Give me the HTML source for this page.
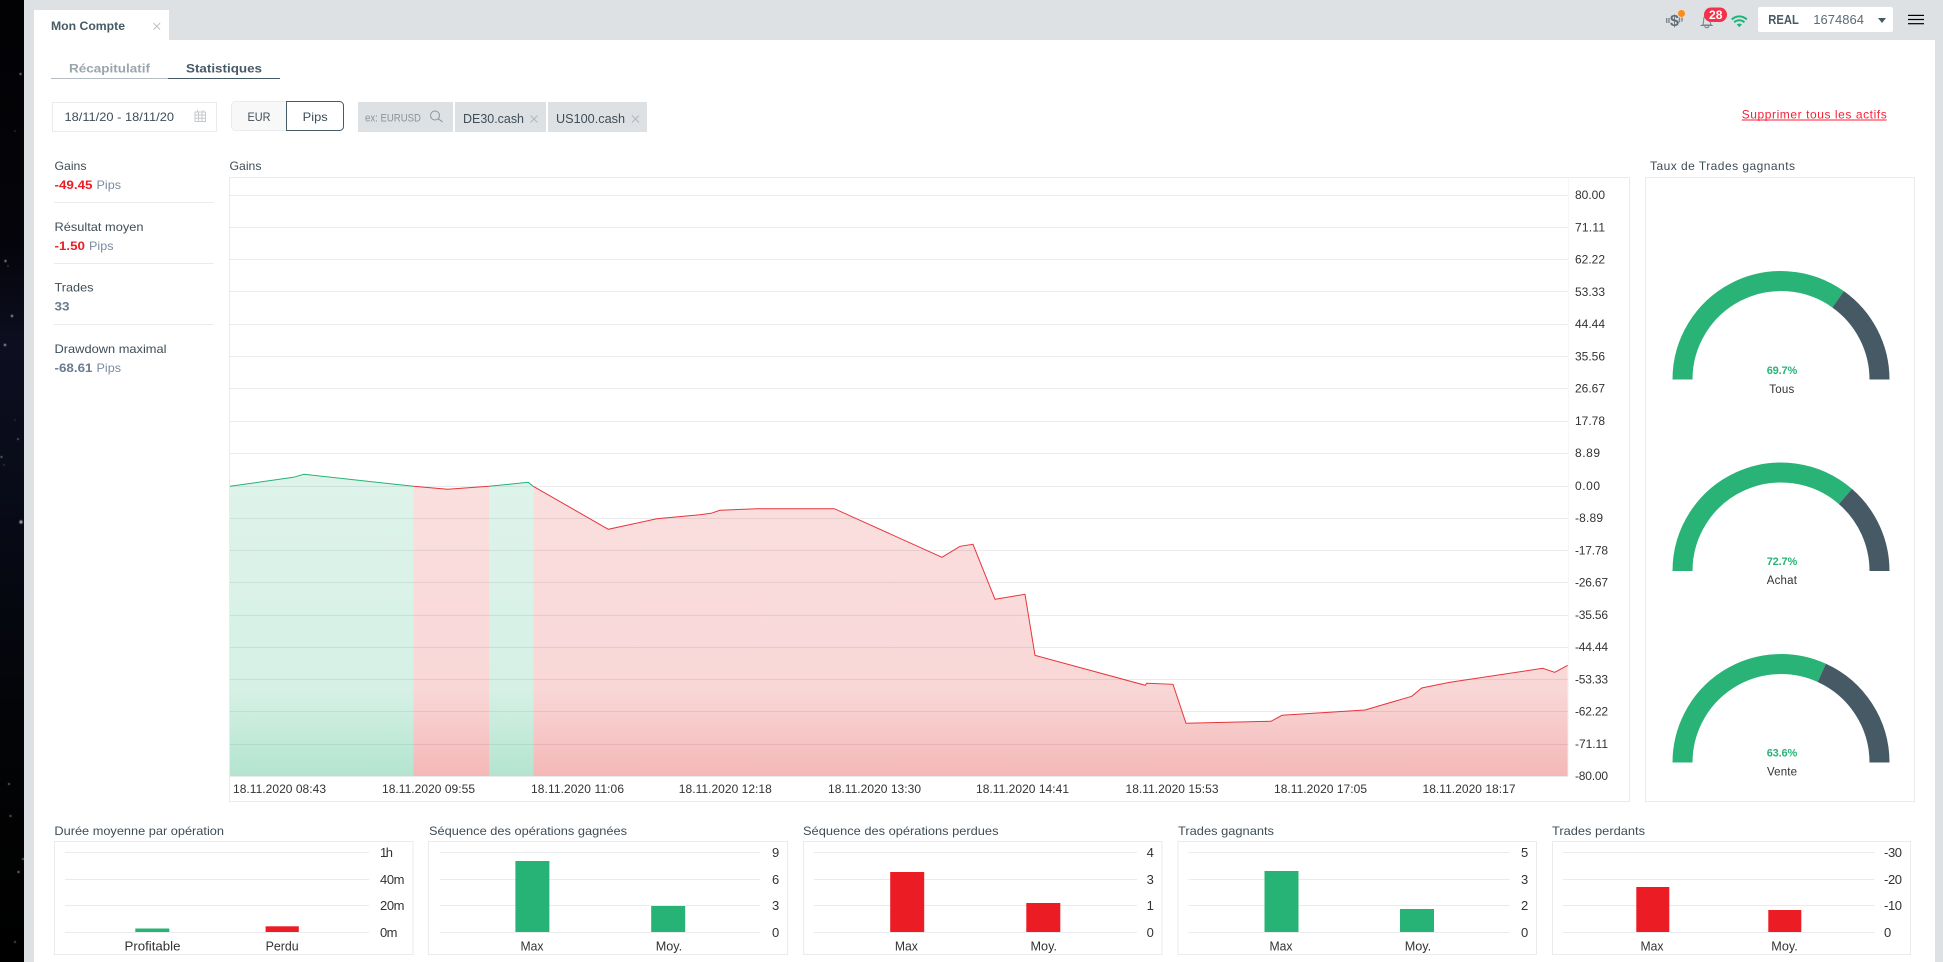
<!DOCTYPE html>
<html lang="fr">
<head>
<meta charset="utf-8">
<title>Mon Compte - Statistiques</title>
<style>
html,body{margin:0;padding:0;background:#000;width:1943px;height:962px;overflow:hidden}
svg{display:block}
text{font-family:"Liberation Sans",sans-serif;font-size:12px;fill:#3b4750}
.b{font-weight:700}
.n{fill:#333}
.t{fill:#3f4d57}
.v{fill:#7c8aa0}
</style>
</head>
<body>
<svg width="1943" height="962" viewBox="0 0 1943 962" xmlns="http://www.w3.org/2000/svg">
<defs>
<linearGradient id="sky" x1="0" y1="0" x2="0" y2="1">
<stop offset="0" stop-color="#020204"/><stop offset=".25" stop-color="#04040a"/><stop offset=".36" stop-color="#0d0e20"/><stop offset=".55" stop-color="#070a16"/><stop offset=".75" stop-color="#030406"/><stop offset="1" stop-color="#000"/>
</linearGradient>
<linearGradient id="fr" gradientUnits="userSpaceOnUse" x1="0" y1="470" x2="0" y2="776">
<stop offset="0" stop-color="#dd2020" stop-opacity=".14"/><stop offset=".72" stop-color="#dd2020" stop-opacity=".18"/><stop offset="1" stop-color="#dd2020" stop-opacity=".32"/>
</linearGradient>
<linearGradient id="fg" gradientUnits="userSpaceOnUse" x1="0" y1="470" x2="0" y2="776">
<stop offset="0" stop-color="#26b276" stop-opacity=".15"/><stop offset=".72" stop-color="#26b276" stop-opacity=".19"/><stop offset="1" stop-color="#26b276" stop-opacity=".35"/>
</linearGradient>
<clipPath id="cg"><rect x="230" y="450" width="183.3" height="326"/><rect x="489" y="450" width="44.3" height="326"/></clipPath>
<clipPath id="cr"><rect x="413.3" y="450" width="75.7" height="326"/><rect x="533.3" y="450" width="1035" height="326"/></clipPath>
<filter id="soft" x="-50%" y="-50%" width="200%" height="200%"><feGaussianBlur stdDeviation=".5"/></filter>
</defs>

<!-- backdrop -->
<rect x="0" y="0" width="24" height="962" fill="url(#sky)"/>
<g fill="#cfcfcf" filter="url(#soft)" opacity=".75">
<circle cx="20.5" cy="74" r="1"/><circle cx="15" cy="131" r=".7" opacity=".5"/><circle cx="5.5" cy="261" r="1.1"/><circle cx="8" cy="266" r=".7" opacity=".6"/><circle cx="12" cy="316" r="1.2"/><circle cx="5" cy="345" r="1.2"/><circle cx="1.5" cy="457" r=".9"/><circle cx="18" cy="439" r=".8"/><circle cx="4" cy="465" r=".7" opacity=".5"/><circle cx="21" cy="522" r="1.7"/><circle cx="9" cy="784" r=".9"/><circle cx="10.5" cy="816" r=".9"/><circle cx="23" cy="859" r=".9"/><circle cx="18.5" cy="872" r="1"/><circle cx="15" cy="942" r=".8"/><circle cx="15" cy="420" r=".6" opacity=".5"/>
</g>
<rect x="24" y="0" width="1919" height="962" fill="#dde1e4"/>
<rect x="34" y="40" width="1901" height="922" fill="#fff"/>

<!-- window tab -->
<rect x="34" y="10" width="135" height="30" fill="#fff"/>
<text x="51" y="30" class="b" style="fill:#465a66" textLength="74" lengthAdjust="spacingAndGlyphs">Mon Compte</text>
<path d="M153.5 23l6.6 6.6M160.100 23l-6.600 6.600" stroke="#bcc2c6" stroke-width="1" fill="none"/>

<!-- header right -->
<text x="1674.500" y="26" class="b" text-anchor="middle" style="font-size:16px;fill:#5f6d76">$</text>
<path d="M1666.700 18v5M1669 18v5M1679.500 17.500v5M1682 17.500v4" stroke="#7b8790" stroke-width="1.400" fill="none"/>
<circle cx="1681.500" cy="13.500" r="3.500" fill="#ff8c14"/>
<path d="M1702.500 25c1.300-1.500 1-3.500 1.200-5.500.2-2.500 1.300-4.500 3.100-4.500s3 2 3.200 4.500c.2 2 0 4 1.300 5.500zM1700.500 25.500h12.300M1704.800 26c.3 2.300 3.700 2.300 4 0" fill="none" stroke="#75828b" stroke-width="1"/>
<rect x="1704" y="7.500" width="23" height="14.500" rx="7.200" fill="#f5304a"/>
<text x="1709" y="19" class="b" style="fill:#fff;font-size:12px" textLength="13.500" lengthAdjust="spacingAndGlyphs">28</text>
<path d="M1731.800 19.500c4.200-4.200 10.800-4.200 15 0M1734.200 22.300c2.800-2.700 7.400-2.700 10.200 0" fill="none" stroke="#1db67a" stroke-width="2"/>
<path d="M1736.700 24.500c1.500-1.200 3.700-1.200 5.200 0L1739.300 27.200z" fill="#1db67a"/>
<rect x="1758" y="7" width="135" height="25" rx="2" fill="#fff"/>
<text x="1768.300" y="24" class="b" style="fill:#465a66;font-size:13px" textLength="30.500" lengthAdjust="spacingAndGlyphs">REAL</text>
<text x="1813.300" y="24" style="fill:#5b6b75;font-size:13px" textLength="50.700" lengthAdjust="spacing">1674864</text>
<path d="M1878 18h8l-4 5z" fill="#465a66"/>
<rect x="1908" y="14.800" width="16" height="1.200" fill="#000"/><rect x="1908" y="18.900" width="16" height="1.200" fill="#000"/><rect x="1908" y="23.100" width="16" height="1.200" fill="#000"/>

<!-- subtabs -->
<text x="69" y="72.500" class="b" style="fill:#9aa5ac" textLength="81" lengthAdjust="spacingAndGlyphs">Récapitulatif</text>
<text x="186" y="72.500" class="b" style="fill:#465a66" textLength="76" lengthAdjust="spacingAndGlyphs">Statistiques</text>
<rect x="51" y="78" width="117" height="1" fill="#b5bdc2"/><rect x="168" y="78" width="112" height="1" fill="#465a66"/>

<!-- filters -->
<rect x="52.500" y="102.500" width="164" height="29" fill="#fff" stroke="#e9ebed"/>
<text x="64.500" y="121" class="t" textLength="109.500" lengthAdjust="spacingAndGlyphs">18/11/20 - 18/11/20</text>
<g fill="none" stroke="#c6cacd" stroke-width="1">
<rect x="195" y="112" width="10.500" height="9.500"/><path d="M195 115h10.500M198.500 112v9.500M202 112v9.500M195 118.300h10.500M197.500 110v2M203 110v2"/>
</g>
<rect x="231.500" y="101.500" width="112" height="29" rx="4" fill="#f8f8f8" stroke="#e9ebed"/>
<path d="M286.500 101.500h53a4 4 0 0 1 4 4v21a4 4 0 0 1-4 4h-53z" fill="#fff" stroke="#465a66"/>
<text x="247.500" y="121" class="t" textLength="23" lengthAdjust="spacingAndGlyphs">EUR</text>
<text x="302.700" y="121" class="t" textLength="25" lengthAdjust="spacingAndGlyphs">Pips</text>
<rect x="358" y="102" width="95" height="30" fill="#dde1e4"/>
<text x="365" y="121.500" style="font-size:11px;fill:#8b949a" textLength="56" lengthAdjust="spacingAndGlyphs">ex: EURUSD</text>
<circle cx="435" cy="115.500" r="4.500" fill="none" stroke="#8b949a"/><path d="M438.200 118.800l4.300 3" stroke="#8b949a" fill="none"/>
<rect x="455" y="102" width="91" height="30" fill="#dde1e4"/>
<text x="463" y="123" class="t" style="font-size:13px" textLength="61" lengthAdjust="spacingAndGlyphs">DE30.cash</text>
<path d="M530.500 115.500l7 7M537.500 115.500l-7 7" stroke="#b0b7bc" fill="none"/>
<rect x="548" y="102" width="99" height="30" fill="#dde1e4"/>
<text x="556" y="123" class="t" style="font-size:13px" textLength="69" lengthAdjust="spacingAndGlyphs">US100.cash</text>
<path d="M632 115.500l7 7M639 115.500l-7 7" stroke="#b0b7bc" fill="none"/>
<text x="1741.700" y="118.500" style="fill:#f61f35" textLength="145" lengthAdjust="spacing">Supprimer tous les actifs</text>
<rect x="1741.700" y="119.500" width="145" height="1" fill="#f61f35"/>

<!-- left stats -->
<text x="54.500" y="170" class="t" textLength="32" lengthAdjust="spacingAndGlyphs">Gains</text>
<text x="54.500" y="189" class="b" style="fill:#ed1c24" textLength="38" lengthAdjust="spacingAndGlyphs">-49.45</text>
<text x="96.500" y="189" class="v" textLength="24.500" lengthAdjust="spacingAndGlyphs">Pips</text>
<rect x="54" y="202" width="160" height="1" fill="#e9ebed"/>
<text x="54.500" y="231" class="t" textLength="89" lengthAdjust="spacingAndGlyphs">Résultat moyen</text>
<text x="54.500" y="250" class="b" style="fill:#ed1c24" textLength="30.500" lengthAdjust="spacingAndGlyphs">-1.50</text>
<text x="89" y="250" class="v" textLength="24.500" lengthAdjust="spacingAndGlyphs">Pips</text>
<rect x="54" y="263" width="160" height="1" fill="#e9ebed"/>
<text x="54.500" y="291.500" class="t" textLength="39" lengthAdjust="spacingAndGlyphs">Trades</text>
<text x="54.500" y="310.500" class="b" style="fill:#6a7b90" textLength="15" lengthAdjust="spacingAndGlyphs">33</text>
<rect x="54" y="324" width="160" height="1" fill="#e9ebed"/>
<text x="54.500" y="353" class="t" textLength="112" lengthAdjust="spacingAndGlyphs">Drawdown maximal</text>
<text x="54.500" y="372" class="b" style="fill:#6a7b90" textLength="38" lengthAdjust="spacingAndGlyphs">-68.61</text>
<text x="96.500" y="372" class="v" textLength="24.500" lengthAdjust="spacingAndGlyphs">Pips</text>

<!-- main chart -->
<text x="229.500" y="170" class="t" textLength="32" lengthAdjust="spacingAndGlyphs">Gains</text>
<rect x="229.500" y="177.500" width="1400" height="624" fill="#fff" stroke="#e9ebed"/>
<rect x="1568" y="178" width="1" height="598" fill="#f5f6f6"/>
<g fill="#e9ebed">
<rect x="230" y="195" width="1338" height="1"/><rect x="230" y="227" width="1338" height="1"/><rect x="230" y="259" width="1338" height="1"/><rect x="230" y="291" width="1338" height="1"/><rect x="230" y="324" width="1338" height="1"/><rect x="230" y="356" width="1338" height="1"/><rect x="230" y="388" width="1338" height="1"/><rect x="230" y="421" width="1338" height="1"/><rect x="230" y="453" width="1338" height="1"/><rect x="230" y="486" width="1338" height="1"/><rect x="230" y="518" width="1338" height="1"/><rect x="230" y="550" width="1338" height="1"/><rect x="230" y="582" width="1338" height="1"/><rect x="230" y="615" width="1338" height="1"/><rect x="230" y="647" width="1338" height="1"/><rect x="230" y="679" width="1338" height="1"/><rect x="230" y="711" width="1338" height="1"/><rect x="230" y="744" width="1338" height="1"/><rect x="230" y="776" width="1338" height="1"/>
</g>
<path d="M230 486.300L293.300 477.300 304 474.300 413.300 486.300 447.700 489.300 489 486.300 528.300 482.300 533.300 486.300 608.300 529.300 656.700 518.700 700 514.700 711 513.300 720 510.300 756.700 508.700 834.300 508.700 942 557.300 960 546.300 973 544.300 995 599.300 1025 594.300 1035 655.300 1145.300 685.300 1146.700 683.300 1173 684.300 1186 723.300 1271 721.300 1282 715.300 1365 710 1411.700 696.300 1421.700 688 1450 682.300 1542.700 668.300 1554.700 672.300 1567.700 665.300V776H230Z" fill="url(#fr)" clip-path="url(#cr)"/>
<path d="M230 486.300L293.300 477.300 304 474.300 413.300 486.300 447.700 489.300 489 486.300 528.300 482.300 533.300 486.300 608.300 529.300 656.700 518.700 700 514.700 711 513.300 720 510.300 756.700 508.700 834.300 508.700 942 557.300 960 546.300 973 544.300 995 599.300 1025 594.300 1035 655.300 1145.300 685.300 1146.700 683.300 1173 684.300 1186 723.300 1271 721.300 1282 715.300 1365 710 1411.700 696.300 1421.700 688 1450 682.300 1542.700 668.300 1554.700 672.300 1567.700 665.300V776H230Z" fill="url(#fg)" clip-path="url(#cg)"/>
<path d="M230 486.300L293.300 477.300 304 474.300 413.300 486.300 447.700 489.300 489 486.300 528.300 482.300 533.300 486.300 608.300 529.300 656.700 518.700 700 514.700 711 513.300 720 510.300 756.700 508.700 834.300 508.700 942 557.300 960 546.300 973 544.300 995 599.300 1025 594.300 1035 655.300 1145.300 685.300 1146.700 683.300 1173 684.300 1186 723.300 1271 721.300 1282 715.300 1365 710 1411.700 696.300 1421.700 688 1450 682.300 1542.700 668.300 1554.700 672.300 1567.700 665.300" fill="none" stroke="#e8353c" stroke-width="1" clip-path="url(#cr)"/>
<path d="M230 486.300L293.300 477.300 304 474.300 413.300 486.300 447.700 489.300 489 486.300 528.300 482.300 533.300 486.300" fill="none" stroke="#26b276" stroke-width="1" clip-path="url(#cg)"/>
<g>
<text x="1575" y="199" class="n" textLength="30">80.00</text><text x="1575" y="231.300" class="n" textLength="30">71.11</text><text x="1575" y="263.500" class="n" textLength="30">62.22</text><text x="1575" y="295.800" class="n" textLength="30">53.33</text><text x="1575" y="328" class="n" textLength="30">44.44</text><text x="1575" y="360.300" class="n" textLength="30">35.56</text><text x="1575" y="392.600" class="n" textLength="30">26.67</text><text x="1575" y="424.800" class="n" textLength="30">17.78</text><text x="1575" y="457.100" class="n" textLength="25">8.89</text><text x="1575" y="490" class="n" textLength="25">0.00</text><text x="1575" y="522" class="n" textLength="28">-8.89</text><text x="1575" y="554.500" class="n" textLength="33">-17.78</text><text x="1575" y="586.500" class="n" textLength="33">-26.67</text><text x="1575" y="619" class="n" textLength="33">-35.56</text><text x="1575" y="651.200" class="n" textLength="33">-44.44</text><text x="1575" y="683.500" class="n" textLength="33">-53.33</text><text x="1575" y="715.700" class="n" textLength="33">-62.22</text><text x="1575" y="748" class="n" textLength="33">-71.11</text><text x="1575" y="780" class="n" textLength="33">-80.00</text>
</g>
<text x="233" y="793" class="n" textLength="93">18.11.2020 08:43</text>
<text x="382" y="793" class="n" textLength="93">18.11.2020 09:55</text>
<text x="531" y="793" class="n" textLength="93">18.11.2020 11:06</text>
<text x="678.800" y="793" class="n" textLength="93">18.11.2020 12:18</text>
<text x="828" y="793" class="n" textLength="93">18.11.2020 13:30</text>
<text x="976" y="793" class="n" textLength="93">18.11.2020 14:41</text>
<text x="1125.500" y="793" class="n" textLength="93">18.11.2020 15:53</text>
<text x="1274" y="793" class="n" textLength="93">18.11.2020 17:05</text>
<text x="1422.500" y="793" class="n" textLength="93">18.11.2020 18:17</text>

<!-- gauges -->
<text x="1650" y="170" class="t" textLength="145" lengthAdjust="spacing">Taux de Trades gagnants</text>
<rect x="1645.500" y="177.500" width="269" height="624" fill="#fff" stroke="#e9ebed"/>
<g fill="none" stroke-width="20">
<path d="M1682.500 379.500A98.500 98.500 0 0 1 1838.100 299.300" stroke="#29b377"/>
<path d="M1838.100 299.300A98.500 98.500 0 0 1 1879.500 379.500" stroke="#465a66"/>
<path d="M1682.500 571A98.500 98.500 0 0 1 1845.400 496.500" stroke="#29b377"/>
<path d="M1845.400 496.500A98.500 98.500 0 0 1 1879.500 571" stroke="#465a66"/>
<path d="M1682.500 762.500A98.500 98.500 0 0 1 1821.800 672.900" stroke="#29b377"/>
<path d="M1821.800 672.900A98.500 98.500 0 0 1 1879.500 762.500" stroke="#465a66"/>
</g>
<text x="1766.700" y="374" class="b" style="fill:#29b377;font-size:11px" textLength="30.600" lengthAdjust="spacing">69.7%</text>
<text x="1769.300" y="393" class="n" style="font-size:11.500px" textLength="25">Tous</text>
<text x="1766.700" y="565" class="b" style="fill:#29b377;font-size:11px" textLength="30.600" lengthAdjust="spacing">72.7%</text>
<text x="1766.700" y="584" class="n" style="font-size:11.500px" textLength="30.300">Achat</text>
<text x="1766.700" y="756.500" class="b" style="fill:#29b377;font-size:11px" textLength="30.600" lengthAdjust="spacing">63.6%</text>
<text x="1767" y="775.500" class="n" style="font-size:11.500px" textLength="30">Vente</text>

<!-- small chart titles -->
<text x="54.400" y="835" class="t" textLength="169.600" lengthAdjust="spacingAndGlyphs">Durée moyenne par opération</text>
<text x="429" y="835" class="t" textLength="198" lengthAdjust="spacingAndGlyphs">Séquence des opérations gagnées</text>
<text x="803" y="835" class="t" textLength="195.500" lengthAdjust="spacingAndGlyphs">Séquence des opérations perdues</text>
<text x="1178" y="835" class="t" textLength="96" lengthAdjust="spacingAndGlyphs">Trades gagnants</text>
<text x="1552" y="835" class="t" textLength="93" lengthAdjust="spacingAndGlyphs">Trades perdants</text>

<!-- small chart boxes -->
<g fill="#fff" stroke="#e9ebed">
<rect x="54.500" y="841.500" width="358.500" height="113"/>
<rect x="428.500" y="841.500" width="359" height="113"/>
<rect x="803.500" y="841.500" width="358.500" height="113"/>
<rect x="1178" y="841.500" width="358.500" height="113"/>
<rect x="1552.500" y="841.500" width="358" height="113"/>
</g>
<g fill="#e9ebed">
<rect x="65" y="852" width="304" height="1"/><rect x="65" y="879" width="304" height="1"/><rect x="65" y="905" width="304" height="1"/><rect x="65" y="932" width="304" height="1"/>
<rect x="439.500" y="852" width="321" height="1"/><rect x="439.500" y="879" width="321" height="1"/><rect x="439.500" y="905" width="321" height="1"/><rect x="439.500" y="932" width="321" height="1"/>
<rect x="814" y="852" width="323" height="1"/><rect x="814" y="879" width="323" height="1"/><rect x="814" y="905" width="323" height="1"/><rect x="814" y="932" width="323" height="1"/>
<rect x="1188.500" y="852" width="321.500" height="1"/><rect x="1188.500" y="879" width="321.500" height="1"/><rect x="1188.500" y="905" width="321.500" height="1"/><rect x="1188.500" y="932" width="321.500" height="1"/>
<rect x="1563" y="852" width="311.500" height="1"/><rect x="1563" y="879" width="311.500" height="1"/><rect x="1563" y="905" width="311.500" height="1"/><rect x="1563" y="932" width="311.500" height="1"/>
</g>
<!-- bars -->
<g fill="#27b376">
<rect x="135.300" y="928.500" width="34" height="3.500"/>
<rect x="515.400" y="861" width="34" height="71"/><rect x="651.200" y="906" width="34" height="26"/>
<rect x="1264.500" y="871" width="34" height="61"/><rect x="1400" y="909" width="34" height="23"/>
</g>
<g fill="#ec1c24">
<rect x="265.600" y="926.300" width="33.200" height="5.700"/>
<rect x="890.200" y="872" width="34" height="60"/><rect x="1026.300" y="903" width="34" height="29"/>
<rect x="1636.300" y="887" width="33" height="45"/><rect x="1768.300" y="910" width="33" height="22"/>
</g>
<!-- small chart labels -->
<g>
<text x="380" y="857" class="n" style="font-size:13px" textLength="13">1h</text><text x="380" y="884" class="n" style="font-size:13px" textLength="24.500">40m</text><text x="380" y="910" class="n" style="font-size:13px" textLength="24.500">20m</text><text x="380" y="937" class="n" style="font-size:13px" textLength="17.500">0m</text>
<text x="772" y="857" class="n" style="font-size:13px">9</text><text x="772" y="884" class="n" style="font-size:13px">6</text><text x="772" y="910" class="n" style="font-size:13px">3</text><text x="772" y="937" class="n" style="font-size:13px">0</text>
<text x="1146.600" y="857" class="n" style="font-size:13px">4</text><text x="1146.600" y="884" class="n" style="font-size:13px">3</text><text x="1146.600" y="910" class="n" style="font-size:13px">1</text><text x="1146.600" y="937" class="n" style="font-size:13px">0</text>
<text x="1521" y="857" class="n" style="font-size:13px">5</text><text x="1521" y="884" class="n" style="font-size:13px">3</text><text x="1521" y="910" class="n" style="font-size:13px">2</text><text x="1521" y="937" class="n" style="font-size:13px">0</text>
<text x="1884" y="857" class="n" style="font-size:13px" textLength="18">-30</text><text x="1884" y="884" class="n" style="font-size:13px" textLength="18">-20</text><text x="1884" y="910" class="n" style="font-size:13px" textLength="18">-10</text><text x="1884" y="937" class="n" style="font-size:13px">0</text>
<text x="124.500" y="950.500" class="n" style="font-size:13px" textLength="56" lengthAdjust="spacingAndGlyphs">Profitable</text>
<text x="265.600" y="950.500" class="n" style="font-size:13px" textLength="33" lengthAdjust="spacingAndGlyphs">Perdu</text>
<text x="520.500" y="950.500" class="n" style="font-size:13px" textLength="23" lengthAdjust="spacingAndGlyphs">Max</text>
<text x="655.700" y="950.500" class="n" style="font-size:13px" textLength="26.500" lengthAdjust="spacingAndGlyphs">Moy.</text>
<text x="894.900" y="950.500" class="n" style="font-size:13px" textLength="23" lengthAdjust="spacingAndGlyphs">Max</text>
<text x="1030.500" y="950.500" class="n" style="font-size:13px" textLength="26.500" lengthAdjust="spacingAndGlyphs">Moy.</text>
<text x="1269.500" y="950.500" class="n" style="font-size:13px" textLength="23" lengthAdjust="spacingAndGlyphs">Max</text>
<text x="1404.700" y="950.500" class="n" style="font-size:13px" textLength="26.500" lengthAdjust="spacingAndGlyphs">Moy.</text>
<text x="1640.500" y="950.500" class="n" style="font-size:13px" textLength="23" lengthAdjust="spacingAndGlyphs">Max</text>
<text x="1771.300" y="950.500" class="n" style="font-size:13px" textLength="26.500" lengthAdjust="spacingAndGlyphs">Moy.</text>
</g>
</svg>
</body>
</html>
